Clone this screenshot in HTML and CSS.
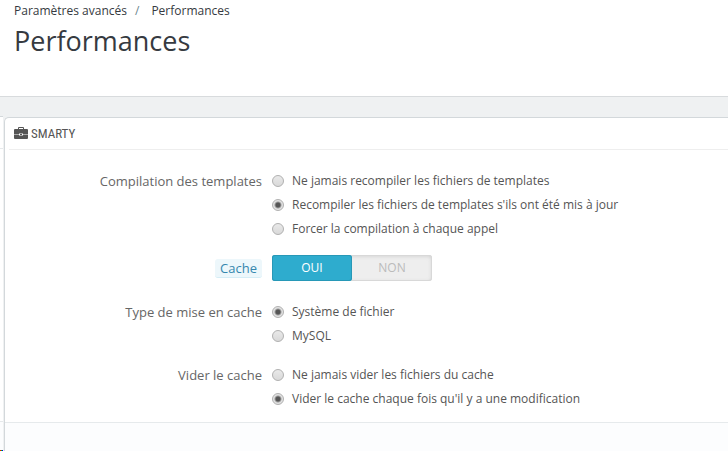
FILE: index.html
```html
<!DOCTYPE html>
<html lang="fr">
<head>
<meta charset="utf-8">
<title>Performances</title>
<link rel="stylesheet" href="styles.css">
</head>
<body>
<header class="page-head">
  <nav class="breadcrumb">
    <a href="#">Paramètres avancés</a><span class="sep">/</span><a href="#">Performances</a>
  </nav>
  <h1>Performances</h1>
</header>
<main class="columns">
  <div class="side"><div class="side-head"></div><div class="side-body"></div><div class="side-foot"><i class="red"></i><i class="green"></i><i class="blue"></i></div></div>
  <form class="panel">
    <h2 class="panel-title">
      <svg width="14" height="12" viewBox="0 0 14 12" aria-hidden="true">
        <path fill="#555" fill-rule="evenodd" d="M4 2V1q0-1 1-1h4q1 0 1 1v1h3q1 0 1 1v4H9V6.500H5V7H0V3q0-1 1-1zM5 2h4V1H5zM0 7.600h5V8q0 .6.6.6h2.800Q9 8.600 9 8V7.600h5V11q0 1-1 1H1q-1 0-1-1zM6 7h2v1H6z"/>
      </svg>SMARTY
    </h2>
    <div class="panel-body">
      <fieldset class="row" aria-labelledby="l1">
        <span class="label" id="l1">Compilation des templates</span>
        <div class="options">
          <label><input type="radio" name="compile">Ne jamais recompiler les fichiers de templates</label>
          <label><input type="radio" name="compile" checked>Recompiler les fichiers de templates s'ils ont été mis à jour</label>
          <label><input type="radio" name="compile">Forcer la compilation à chaque appel</label>
        </div>
      </fieldset>
      <fieldset class="row row-switch" aria-labelledby="l2">
        <span class="label"><span class="hint" id="l2">Cache</span></span>
        <div class="switch">
          <label><input type="radio" name="cache" checked>OUI</label>
          <label><input type="radio" name="cache">NON</label>
        </div>
      </fieldset>
      <fieldset class="row" aria-labelledby="l3">
        <span class="label" id="l3">Type de mise en cache</span>
        <div class="options">
          <label><input type="radio" name="type" checked>Système de fichier</label>
          <label><input type="radio" name="type">MySQL</label>
        </div>
      </fieldset>
      <fieldset class="row" aria-labelledby="l4">
        <span class="label" id="l4">Vider le cache</span>
        <div class="options">
          <label><input type="radio" name="clear">Ne jamais vider les fichiers du cache</label>
          <label><input type="radio" name="clear" checked>Vider le cache chaque fois qu'il y a une modification</label>
        </div>
      </fieldset>
    </div>
    <div class="panel-foot"></div>
  </form>
</main>
</body>
</html>
```

FILE: styles.css
```css
* { box-sizing: border-box; }
body {
  margin: 0;
  min-height: 100vh;
  display: flex;
  flex-direction: column;
  background: #eff1f2;
  color: #555;
  font: 12px/24px "Open Sans", sans-serif;
}
.page-head {
  height: 97px;
  padding: 0 14px;
  background: #fff;
  border-bottom: 1px solid #d8dbdd;
}
.breadcrumb { line-height: 22px; }
.breadcrumb a { color: #363a41; text-decoration: none; }
.sep { margin: 0 12px 0 8px; color: #6c868e; }
h1 {
  margin: 0;
  color: #363a41;
  font-size: 27px;
  font-weight: 400;
  line-height: 38px;
}
.columns {
  flex: 1;
  display: grid;
  grid-template-columns: 3px 1fr;
  column-gap: 1px;
  padding-top: 19px;
}
.side { display: flex; flex-direction: column; background: #fff; border-top: 1px solid #d3d8db; }
.side-head { height: 32px; border-bottom: 1px solid #e6e9eb; }
.side-body { flex: 1; border-bottom: 1px solid #e6e9eb; }
.side-foot { display: flex; align-items: flex-end; height: 29px; background: #fcfdfe; }
.side-foot i { width: 1px; height: 1px; }
.red { background: #f00; }
.green { background: #0c0; }
.blue { background: #00f; }
.panel {
  display: flex;
  flex-direction: column;
  margin-top: 1px;
  background: #fff;
  border: 1px solid #d3d8db;
  border-width: 1px 0 0 1px;
  border-radius: 5px 0 0 0;
}
.panel-title {
  display: flex;
  align-items: center;
  gap: 3px;
  height: 32px;
  margin: 0 0 0 4px;
  padding-left: 5px;
  border-bottom: 1px solid #eee;
  color: #555;
  font: 400 13px/30px "Ubuntu Condensed", "Roboto Condensed", "Open Sans", sans-serif;
}
.panel-title svg { margin-bottom: 2px; }
.panel-body { flex: 1; padding: 19px 0 10px; }
.row {
  display: grid;
  grid-template-columns: 257px 1fr;
  column-gap: 10px;
  margin: 0 0 15px;
  padding: 0;
  border: 0;
}
.row:last-child { margin-bottom: 0; }
.label { text-align: right; color: #666; font-size: 13px; line-height: 24px; }
.row-switch { margin: -1px 0 19px; }
.row-switch .label { line-height: 26px; }
.hint {
  display: inline-block;
  padding: 0 5px;
  background: #edf7fb;
  border-bottom: 1px solid #d5edf6;
  border-radius: 3px;
  color: #3586ae;
  line-height: 18px;
}
.options label { display: flex; align-items: center; gap: 8px; }
.options input {
  appearance: none;
  width: 12px;
  height: 12px;
  margin: 0;
  border: 1px solid #b0b0b0;
  border-radius: 50%;
  background: linear-gradient(#e9e9e9, #d9d9d9);
}
.options input:checked { background: radial-gradient(circle, #555 0 2px, #e2e2e2 4px); }
.switch {
  display: flex;
  width: 160px;
  height: 26px;
  border-radius: 3px;
  background: #eee;
  box-shadow: inset 0 0 0 1px #d8d8d8, inset 0 1px 4px #ccc;
}
.switch label { flex: 1; border-radius: 3px; color: #bbb; line-height: 26px; text-align: center; }
.switch label:has(:checked) {
  background: #2eacce;
  box-shadow: inset 0 0 0 1px #2798b7;
  color: #fff;
}
.switch input { position: absolute; opacity: 0; }
.panel-foot { height: 29px; border-top: 1px solid #e6eaec; background: #fcfdfe; }
```
